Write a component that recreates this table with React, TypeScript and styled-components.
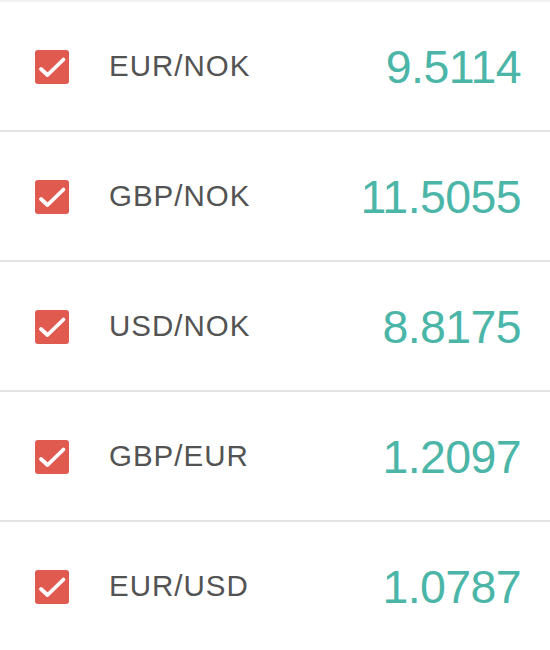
import React from "react";
import styled, { createGlobalStyle } from "styled-components";

const Global = createGlobalStyle`
  html, body { margin: 0; padding: 0; background: #ffffff; }
  body { font-family: "Liberation Sans", Arial, sans-serif; }
`;

const List = styled.ul`
  list-style: none;
  margin: 0;
  padding: 0;
  width: 550px;
  border-top: 2px solid #f1f1f1;
`;

const Row = styled.li`
  display: flex;
  align-items: center;
  height: 128px;
  border-bottom: 2px solid #e3e3e3;
  padding: 0 29px 0 35px;
  box-sizing: content-box;
`;

const Box = styled.span`
  flex: none;
  width: 34px;
  height: 34px;
  border-radius: 3px;
  background: #e05a4f;
  display: flex;
  align-items: center;
  justify-content: center;
  margin-top: 2px;
`;

const Pair = styled.span`
  margin-left: 40px;
  font-size: 29.5px;
  letter-spacing: 1px;
  color: #535353;
  flex: 1;
`;

const Rate = styled.span`
  font-size: 46.5px;
  letter-spacing: -0.6px;
  color: #4bb6a8;
  margin-top: 1px;
`;

const Check = () => (
  <svg width="34" height="34" viewBox="0 0 34 34">
    <path
      d="M6 19 L12.5 25 L28.5 9.5"
      fill="none"
      stroke="#ffffff"
      strokeWidth="3.8"
      strokeLinecap="round"
      strokeLinejoin="round"
    />
  </svg>
);

const rates = [
  { pair: "EUR/NOK", rate: "9.5114" },
  { pair: "GBP/NOK", rate: "11.5055" },
  { pair: "USD/NOK", rate: "8.8175" },
  { pair: "GBP/EUR", rate: "1.2097" },
  { pair: "EUR/USD", rate: "1.0787" },
];

export default function App() {
  return (
    <>
      <Global />
      <List>
        {rates.map((r) => (
          <Row key={r.pair}>
            <Box>
              <Check />
            </Box>
            <Pair>{r.pair}</Pair>
            <Rate>{r.rate}</Rate>
          </Row>
        ))}
      </List>
    </>
  );
}
